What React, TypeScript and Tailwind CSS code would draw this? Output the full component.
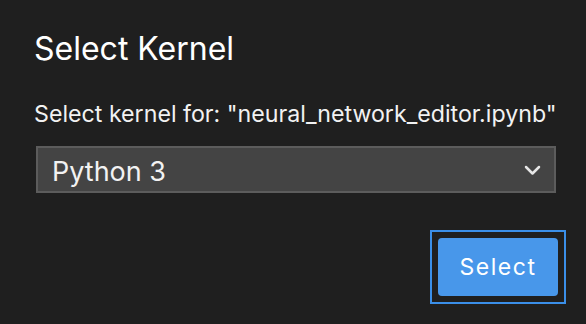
export default function App() {
  return (
    <div className="w-[586px] h-[324px] bg-[#1f1f1f] flex flex-col pl-[34px] pr-[20px] pt-[29px] text-[#f2f2f2]" style={{ fontFamily: "Inter, 'Noto Sans', sans-serif" }}>
      <h1 className="text-[32px] leading-[40px] font-normal text-white">Select Kernel</h1>
      <p className="mt-[29px] text-[23.2px] leading-[32px]">Select kernel for: "neural_network_editor.ipynb"</p>
      <div className="mt-[16px] ml-[2px] mr-[10px] h-[47px] bg-[#444444] border-2 border-[#5c5c5c] flex items-start justify-between pl-[14px] pr-[13px] pt-[8px]">
        <span className="text-[27px] leading-[32px]">Python 3</span>
        <svg width="17" height="11" viewBox="0 0 17 11" className="mt-[9px]">
          <polyline points="2,2 8.5,8.5 15,2" fill="none" stroke="#e6e6e6" strokeWidth="2.5" strokeLinecap="round" strokeLinejoin="round" />
        </svg>
      </div>
      <div className="mt-[37px] flex justify-end">
        <div className="border-2 border-[#3b8fe8] p-[6px]">
          <button className="w-[120px] h-[58px] rounded-[4px] bg-[#4897ea] text-white text-[23px] leading-[58px] tracking-[1.5px]">Select</button>
        </div>
      </div>
    </div>
  );
}
